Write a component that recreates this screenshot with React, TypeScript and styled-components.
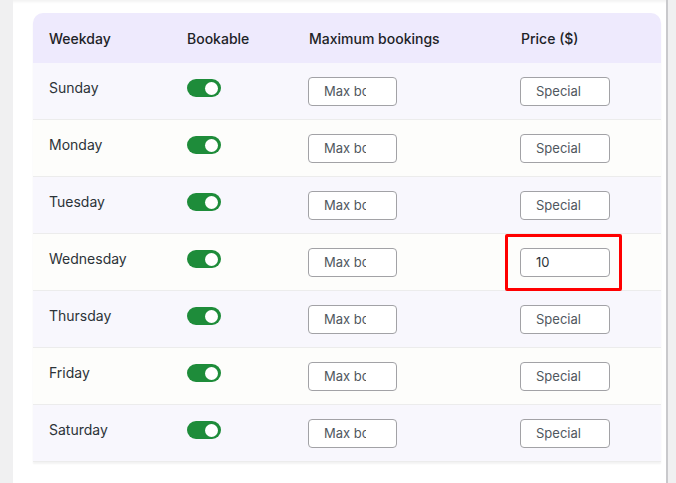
import React from "react";
import styled, { createGlobalStyle } from "styled-components";

const GlobalStyle = createGlobalStyle`
  html, body {
    margin: 0;
    padding: 0;
    background: #f0f0f1;
    font-family: Inter, "Noto Sans", sans-serif;
  }
`;

interface Day {
  name: string;
  price?: string;
  highlight?: boolean;
}

const days: Day[] = [
  { name: "Sunday" },
  { name: "Monday" },
  { name: "Tuesday" },
  { name: "Wednesday", price: "10", highlight: true },
  { name: "Thursday" },
  { name: "Friday" },
  { name: "Saturday" },
];

const Toggle: React.FC<{ on: boolean }> = ({ on }) => (
  <Track $on={on}>
    <Knob />
  </Track>
);

const App: React.FC = () => {
  return (
    <>
      <GlobalStyle />
      <Page>
        <Panel>
          <Card>
            <HeaderRow>
              <HeadCell>Weekday</HeadCell>
              <HeadCell>Bookable</HeadCell>
              <HeadCell>Maximum bookings</HeadCell>
              <HeadCell>Price ($)</HeadCell>
            </HeaderRow>
            {days.map((d, i) => (
              <Row key={d.name} $odd={i % 2 === 0}>
                <Cell>
                  <DayName>{d.name}</DayName>
                </Cell>
                <Cell>
                  <Toggle on />
                </Cell>
                <Cell>
                  <Field $w={89} $padRight={30} placeholder="Max bookings" />
                </Cell>
                <Cell>
                  <Field
                    $w={90}
                    $padRight={27}
                    placeholder="Special price"
                    defaultValue={d.price}
                  />
                  {d.highlight && <Highlight />}
                </Cell>
              </Row>
            ))}
          </Card>
        </Panel>
        <Edge />
      </Page>
    </>
  );
};

export default App;

const Page = styled.div`
  display: flex;
  height: 483px;
  padding-left: 13px;
  overflow: hidden;
`;

const Panel = styled.div`
  width: 653px;
  background: #fff;
  padding: 13px 5px 0 20px;
  box-sizing: border-box;
  box-shadow: inset 0 4px 3px -2px rgba(0, 0, 0, 0.05);
`;

const Edge = styled.div`
  width: 2px;
  background: #c9c9cc;
`;

const Card = styled.div`
  width: 628px;
  border-radius: 10px 10px 0 0;
  overflow: hidden;
  box-shadow: 0 2px 2px rgba(0, 0, 0, 0.05);
`;

const columns = `138px 122px 212px 156px`;

const HeaderRow = styled.div`
  display: grid;
  grid-template-columns: ${columns};
  height: 50px;
  align-items: center;
  background: #eeeafd;
`;

const HeadCell = styled.div`
  padding-left: 16px;
  font-size: 14px;
  font-weight: 500;
  color: #1d2327;
`;

const Row = styled.div<{ $odd: boolean }>`
  display: grid;
  grid-template-columns: ${columns};
  height: 57px;
  box-sizing: border-box;
  border-bottom: 1px solid #ececec;
  background: ${(p) => (p.$odd ? "#f8f7fd" : "#fdfdfb")};
`;

const Cell = styled.div`
  position: relative;
  display: flex;
  align-items: center;
  padding-left: 15px;
`;

const DayName = styled.span`
  padding-left: 1px;
  margin-top: -8px;
  font-size: 14px;
  color: #2c3338;
`;

const Track = styled.div<{ $on: boolean }>`
  margin-left: 1px;
  margin-top: -6px;
  width: 34px;
  height: 18px;
  border-radius: 9px;
  background: ${(p) => (p.$on ? "#1e8c3a" : "#b0b0b0")};
  display: flex;
  align-items: center;
  justify-content: ${(p) => (p.$on ? "flex-end" : "flex-start")};
  padding: 0 3px;
  box-sizing: border-box;
`;

const Knob = styled.div`
  width: 13px;
  height: 13px;
  border-radius: 50%;
  background: #fff;
`;

const Field = styled.input<{ $w: number; $padRight: number }>`
  width: ${(p) => p.$w}px;
  height: 29px;
  box-sizing: border-box;
  border: 1px solid #a2a2a6;
  border-radius: 4px;
  background: #fff;
  padding: 0 ${(p) => p.$padRight}px 0 15px;
  font-family: Inter, "Noto Sans", sans-serif;
  font-size: 13px;
  color: #2c3338;
  outline: none;

  &::placeholder {
    color: #50575e;
    opacity: 1;
  }
`;

const Highlight = styled.div`
  position: absolute;
  left: 0;
  top: 0;
  width: 117px;
  height: 57px;
  box-sizing: border-box;
  border: 3px solid #ff0000;
  border-radius: 2px;
  pointer-events: none;
`;
